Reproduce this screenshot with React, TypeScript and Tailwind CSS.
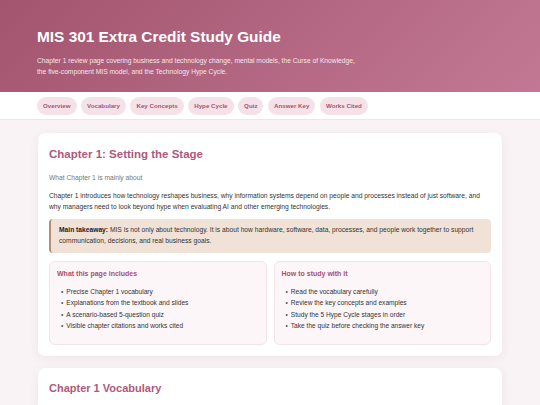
import React from 'react';

const navItems: string[] = [
  'Overview',
  'Vocabulary',
  'Key Concepts',
  'Hype Cycle',
  'Quiz',
  'Answer Key',
  'Works Cited',
];

const includes: string[] = [
  'Precise Chapter 1 vocabulary',
  'Explanations from the textbook and slides',
  'A scenario-based 5-question quiz',
  'Visible chapter citations and works cited',
];

const studyTips: string[] = [
  'Read the vocabulary carefully',
  'Review the key concepts and examples',
  'Study the 5 Hype Cycle stages in order',
  'Take the quiz before checking the answer key',
];

const InfoBox: React.FC<{ title: string; items: string[] }> = ({ title, items }) => (
  <div className="bg-[#fdf6f8] border border-[#f4e3e9] rounded-[6px] px-[7px] pt-[6px] pb-[13px]">
    <h4 className="text-[7px] font-bold text-[#a8506f] leading-[11px] mb-[7px]">{title}</h4>
    <ul className="pl-[4px] text-[6.6px] text-[#333] leading-[11.3px]">
      {items.map((item) => (
        <li key={item} className="flex gap-[3px]">
          <span className="text-[#555]">•</span>
          <span>{item}</span>
        </li>
      ))}
    </ul>
  </div>
);

export default function App() {
  return (
    <div className="min-h-[405px] bg-[#f9f3f5] font-['Liberation_Sans',Arial,sans-serif]">
      {/* Header */}
      <header className="h-[92px] bg-[linear-gradient(135deg,#a3546e,#c27893)] px-[37px] pt-[26px]">
        <h1 className="text-[15.4px] font-bold text-white leading-[22px]">MIS 301 Extra Credit Study Guide</h1>
        <p className="mt-[7px] text-[6.7px] text-[#f6e6ec] leading-[11px] max-w-[324px]">
          Chapter 1 review page covering business and technology change, mental models, the Curse of Knowledge, the
          five-component MIS model, and the Technology Hype Cycle.
        </p>
      </header>

      {/* Nav */}
      <nav className="bg-white border-b border-[#efe4e8] h-[28px] px-[37px] flex items-center gap-[4.5px]">
        {navItems.map((item) => (
          <span
            key={item}
            className="h-[18px] px-[6px] rounded-full bg-[#f5e2e9] text-[#a55674] text-[6.2px] font-bold flex items-center"
          >
            {item}
          </span>
        ))}
      </nav>

      <main className="px-[38px] pt-[13px] flex flex-col gap-[12px]">
        <section className="bg-white rounded-[7px] shadow-[0_2px_10px_rgba(120,60,90,0.08)] px-[11px] pt-[13px] pb-[11px]">
          <h2 className="text-[11.5px] font-bold text-[#b0587c] leading-[16px]">Chapter 1: Setting the Stage</h2>
          <p className="mt-[10px] text-[6.7px] text-[#777] leading-[11px]">What Chapter 1 is mainly about</p>
          <p className="mt-[7px] text-[6.7px] text-[#333] leading-[11px] pr-[4px]">
            Chapter 1 introduces how technology reshapes business, why information systems depend on people and processes
            instead of just software, and why managers need to look beyond hype when evaluating AI and other emerging
            technologies.
          </p>
          <div className="mt-[7px] bg-[#f1e2d7] border-l-[2px] border-[#b58d70] rounded-[4px] pl-[8px] pr-[10px] pt-[5px] pb-[7px] text-[6.7px] text-[#333] leading-[11px]">
            <strong className="text-[#222]">Main takeaway:</strong> MIS is not only about technology. It is about how
            hardware, software, data, processes, and people work together to support communication, decisions, and real
            business goals.
          </div>
          <div className="mt-[8px] grid grid-cols-2 gap-[7px]">
            <InfoBox title="What this page includes" items={includes} />
            <InfoBox title="How to study with it" items={studyTips} />
          </div>
        </section>

        <section className="bg-white rounded-[7px] shadow-[0_2px_10px_rgba(120,60,90,0.08)] px-[11px] pt-[12px] pb-[20px]">
          <h2 className="text-[11px] font-bold text-[#b0587c] leading-[16px]">Chapter 1 Vocabulary</h2>
        </section>
      </main>
    </div>
  );
}
